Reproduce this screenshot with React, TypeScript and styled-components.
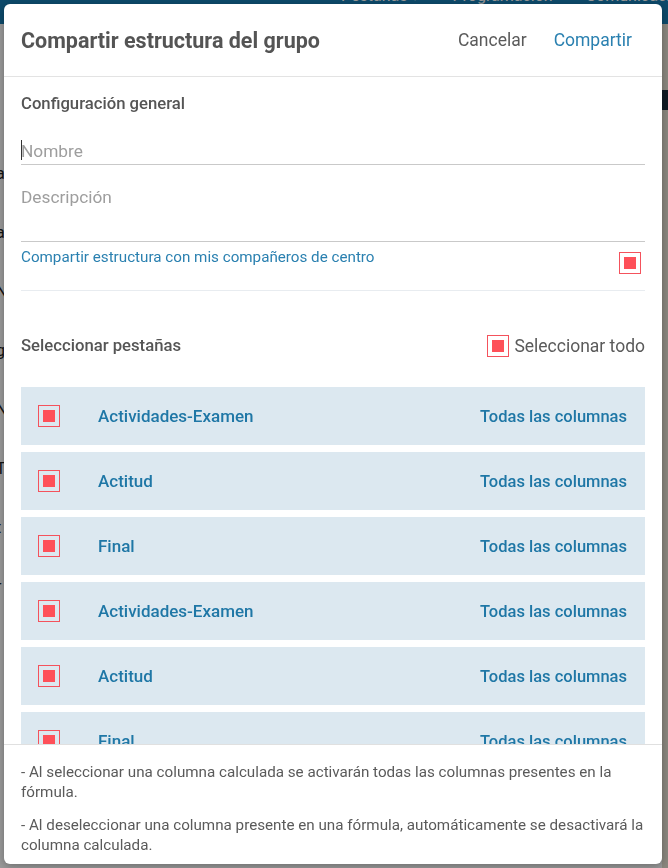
import styled, { createGlobalStyle } from 'styled-components';

const tabs = [
  'Actividades-Examen',
  'Actitud',
  'Final',
  'Actividades-Examen',
  'Actitud',
  'Final',
];

const GlobalStyle = createGlobalStyle`
  body {
    margin: 0;
    font-family: Roboto, "Liberation Sans", sans-serif;
    background: #ffffff;
    overflow: hidden;
  }
`;

const Page = styled.div`
  width: 668px;
  height: 868px;
  display: flex;
  flex-direction: column;
  background: #ffffff;
`;

const TopBar = styled.div`
  height: 24px;
  background: #167bb2;
  display: flex;
  align-items: flex-start;
  gap: 33px;
  padding-left: 341px;
  overflow: hidden;
`;

const NavItem = styled.span`
  color: #ffffff;
  font-size: 16px;
  line-height: 16px;
  margin-top: -12px;
  white-space: nowrap;
`;

const PageBody = styled.div`
  flex: 1;
  display: flex;
  justify-content: space-between;
`;

const SideText = styled.div`
  display: flex;
  flex-direction: column;
  gap: 40px;
  padding-top: 140px;
  margin-left: -4px;
  font-size: 16px;
  color: #222;
`;

const RightRail = styled.div`
  width: 6px;
  background: #e6e0d2;
  display: flex;
  flex-direction: column;
  padding-top: 66px;

  span {
    height: 20px;
    background: #1b2a3a;
  }
`;

const Backdrop = styled.div`
  position: fixed;
  inset: 0;
  background: rgba(0, 0, 0, 0.4);
`;

const Modal = styled.div`
  position: fixed;
  top: 4px;
  left: 4px;
  width: 658px;
  height: 860px;
  background: #ffffff;
  border-radius: 6px;
  box-shadow: 0 2px 8px rgba(0, 0, 0, 0.3);
  display: flex;
  flex-direction: column;
  overflow: hidden;
`;

const Header = styled.div`
  height: 72px;
  flex-shrink: 0;
  display: flex;
  align-items: center;
  padding: 0 30px 0 17px;
  border-bottom: 1px solid #e3e3e3;
`;

const Title = styled.h2`
  flex: 1;
  margin: 0;
  font-size: 21.5px;
  font-weight: 700;
  color: #545454;
`;

const HeaderButton = styled.button<{ $primary?: boolean }>`
  border: none;
  background: none;
  padding: 0;
  margin-left: 27px;
  font-family: inherit;
  font-size: 17.5px;
  color: ${(p) => (p.$primary ? '#2a80b0' : '#5a5a5a')};
`;

const Body = styled.div`
  flex: 1;
  overflow-y: auto;
  scrollbar-width: none;
  padding: 17px 17px 0;
`;

const SectionTitle = styled.div`
  font-size: 16.7px;
  font-weight: 500;
  line-height: 20px;
  color: #555555;
`;

// text caret of the focused "Nombre" field
const Field = styled.div`
  position: relative;
  padding-top: 16px;

  &::before {
    content: '';
    position: absolute;
    left: 0;
    top: 26px;
    width: 1px;
    height: 20px;
    background: #333;
  }
`;

const TextInput = styled.input`
  display: block;
  width: 100%;
  box-sizing: border-box;
  height: 35px;
  padding: 8px 0 0;
  border: none;
  border-bottom: 1px solid #c9c9c9;
  outline: none;
  font-family: inherit;
  font-size: 17.3px;
  color: #333;

  &::placeholder {
    color: #9e9e9e;
  }
`;

const TextArea = styled.textarea`
  display: block;
  width: 100%;
  box-sizing: border-box;
  height: 77px;
  padding: 22px 0 0;
  border: none;
  border-bottom: 1px solid #c9c9c9;
  outline: none;
  resize: none;
  font-family: inherit;
  font-size: 17.3px;
  line-height: 20px;

  &::placeholder {
    color: #9e9e9e;
  }
`;

const ShareRow = styled.div`
  height: 49px;
  box-sizing: border-box;
  display: flex;
  justify-content: space-between;
  align-items: flex-start;
  padding: 6px 4px 0 0;
  border-bottom: 1px solid #e8ecf0;
`;

const ShareLabel = styled.span`
  font-size: 15.2px;
  line-height: 18px;
  color: #2a80b0;
`;

const Check = styled.span<{ $offset?: number }>`
  width: 22px;
  height: 22px;
  box-sizing: border-box;
  flex-shrink: 0;
  border: 1px solid #f4525c;
  display: flex;
  align-items: center;
  justify-content: center;
  margin-top: ${(p) => p.$offset ?? 0}px;

  &::after {
    content: '';
    width: 12px;
    height: 12px;
    background: #fe5059;
  }
`;

const SelectHeader = styled.div`
  margin-top: 44px;
  display: flex;
  align-items: center;
  justify-content: space-between;
`;

const SelectAll = styled.label`
  display: flex;
  align-items: center;
  gap: 5px;
  font-size: 17.5px;
  color: #5a5a5a;
`;

const TabList = styled.ul`
  list-style: none;
  margin: 30px 0 0;
  padding: 0;
  display: flex;
  flex-direction: column;
  gap: 7px;
`;

const TabRow = styled.li`
  height: 58px;
  display: flex;
  align-items: center;
  padding: 0 18px 0 17px;
  background: #dce8f0;
`;

const TabName = styled.span`
  flex: 1;
  margin-left: 38px;
  font-size: 17px;
  font-weight: 500;
  color: #1f77a6;
`;

const TabColumns = styled.span`
  font-size: 16.5px;
  font-weight: 500;
  color: #1f77a6;
`;

const Footer = styled.div`
  flex-shrink: 0;
  height: 120px;
  box-sizing: border-box;
  border-top: 1px solid #e0e0e0;
  padding: 17px 17px 0;
  font-size: 15.2px;
  line-height: 20px;
  color: #5a5a5a;

  p {
    margin: 0 0 13px;
  }
`;

export default function App() {
  return (
    <>
      <GlobalStyle />
      <Page>
        <TopBar>
          <NavItem>Pestañas ▾</NavItem>
          <NavItem>Programación</NavItem>
          <NavItem>Comunicación</NavItem>
        </TopBar>
        <PageBody>
          <SideText>
            <span>a</span>
            <span>a</span>
            <span>N</span>
            <span>g</span>
            <span>N</span>
            <span>T</span>
            <span>t</span>
            <span>r</span>
          </SideText>
          <RightRail>
            <span />
          </RightRail>
        </PageBody>
      </Page>
      <Backdrop />
      <Modal>
        <Header>
          <Title>Compartir estructura del grupo</Title>
          <HeaderButton>Cancelar</HeaderButton>
          <HeaderButton $primary>Compartir</HeaderButton>
        </Header>
        <Body>
          <SectionTitle>Configuración general</SectionTitle>
          <Field>
            <TextInput placeholder="Nombre" />
          </Field>
          <TextArea placeholder="Descripción" />
          <ShareRow>
            <ShareLabel>Compartir estructura con mis compañeros de centro</ShareLabel>
            <Check $offset={4} />
          </ShareRow>
          <SelectHeader>
            <SectionTitle>Seleccionar pestañas</SectionTitle>
            <SelectAll>
              <Check />
              Seleccionar todo
            </SelectAll>
          </SelectHeader>
          <TabList>
            {tabs.map((tab, i) => (
              <TabRow key={i}>
                <Check />
                <TabName>{tab}</TabName>
                <TabColumns>Todas las columnas</TabColumns>
              </TabRow>
            ))}
          </TabList>
        </Body>
        <Footer>
          <p>
            - Al seleccionar una columna calculada se activarán todas las columnas
            presentes en la fórmula.
          </p>
          <p>
            - Al deseleccionar una columna presente en una fórmula, automáticamente
            se desactivará la columna calculada.
          </p>
        </Footer>
      </Modal>
    </>
  );
}
